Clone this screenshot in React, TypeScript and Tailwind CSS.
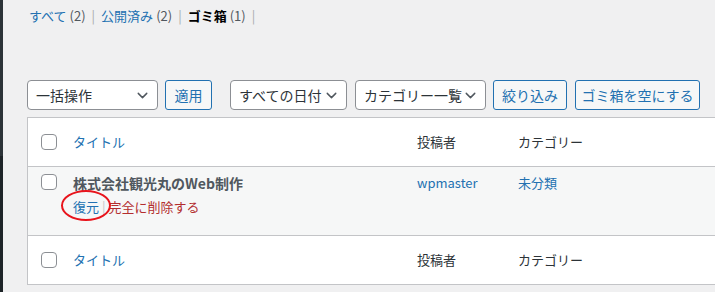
import { ChevronDown } from "lucide-react"

const font = { fontFamily: '"Noto Sans CJK JP", "Noto Sans", sans-serif' }

function Select({ label, width }: { label: string; width: string }) {
  return (
    <div
      className={`flex h-[30px] ${width} items-center justify-between rounded-[4px] border border-[#8c8f94] bg-white pl-[8px] pr-[6px] text-[14px] text-[#2c3338]`}
    >
      <span>{label}</span>
      <ChevronDown className="h-[17px] w-[17px] text-[#50575e]" strokeWidth={2} />
    </div>
  )
}

function Button({ label, width }: { label: string; width: string }) {
  return (
    <div
      className={`flex h-[30px] ${width} items-center justify-center rounded-[3px] border border-[#2271b1] bg-[#f6f7f7] text-[14px] text-[#2271b1]`}
    >
      {label}
    </div>
  )
}

function Checkbox() {
  return <div className="h-[16px] w-[16px] rounded-[4px] border border-[#8c8f94] bg-white" />
}

function HeaderRow() {
  return (
    <div className="flex h-[48px] items-center text-[13px]">
      <div className="flex w-[45px] justify-end pr-[16px]">
        <Checkbox />
      </div>
      <div className="w-[344px] text-[#2271b1]">タイトル</div>
      <div className="w-[101px] text-[#2c3338]">投稿者</div>
      <div className="text-[#2c3338]">カテゴリー</div>
    </div>
  )
}

export default function App() {
  return (
    <div className="flex h-[292px] w-[715px] overflow-hidden bg-[#f0f0f1]" style={font}>
      {/* admin menu edge */}
      <div className="flex w-[3px] shrink-0 flex-col">
        <div className="h-[156px] bg-[#2c3338]" />
        <div className="flex-1 bg-[#1d2327]" />
      </div>

      <div className="flex-1 pl-[24px]">
        {/* status links */}
        <div className="mt-[6px] flex h-[20px] items-center pl-[2px] text-[13px]">
          <span className="text-[#2271b1]">すべて</span>
          <span className="ml-[3px] text-[#50575e]">(2)</span>
          <span className="mx-[6px] text-[#a7aaad]">|</span>
          <span className="text-[#2271b1]">公開済み</span>
          <span className="ml-[3px] text-[#50575e]">(2)</span>
          <span className="mx-[6px] text-[#a7aaad]">|</span>
          <span className="font-bold text-black">ゴミ箱</span>
          <span className="ml-[3px] text-[#50575e]">(1)</span>
          <span className="ml-[6px] text-[#a7aaad]">|</span>
        </div>

        {/* filters */}
        <div className="mt-[54px] flex items-center">
          <Select label="一括操作" width="w-[131px]" />
          <div className="ml-[7px]">
            <Button label="適用" width="w-[47px]" />
          </div>
          <div className="ml-[18px]">
            <Select label="すべての日付" width="w-[117px]" />
          </div>
          <div className="ml-[8px]">
            <Select label="カテゴリー一覧" width="w-[131px]" />
          </div>
          <div className="ml-[7px]">
            <Button label="絞り込み" width="w-[74px]" />
          </div>
          <div className="ml-[8px]">
            <Button label="ゴミ箱を空にする" width="w-[125px]" />
          </div>
        </div>

        {/* posts table */}
        <div className="mt-[7px] w-[710px] border border-[#c3c4c7] bg-white">
          <HeaderRow />
          <div className="relative flex h-[70px] border-y border-[#c3c4c7] bg-[#f6f7f7] pt-[6px] text-[13px]">
            <div className="flex w-[45px] justify-end pr-[16px] pt-[1px]">
              <Checkbox />
            </div>
            <div className="w-[344px]">
              <div className="text-[14px] font-bold leading-[20px] text-[#50575e]">株式会社観光丸のWeb制作</div>
              <div className="mt-[4px] flex items-center leading-[20px]">
                <span className="text-[#2271b1]">復元</span>
                <span className="mx-[3px] text-[#c3c4c7]">|</span>
                <span className="text-[#b32d2e]">完全に削除する</span>
              </div>
              <div className="absolute left-[33px] top-[23px] h-[31px] w-[50px] rounded-[50%] border-2 border-[#e8141c]" />
            </div>
            <div className="w-[101px] leading-[20px] text-[#2271b1]">wpmaster</div>
            <div className="leading-[20px] text-[#2271b1]">未分類</div>
          </div>
          <HeaderRow />
        </div>
      </div>
    </div>
  )
}
